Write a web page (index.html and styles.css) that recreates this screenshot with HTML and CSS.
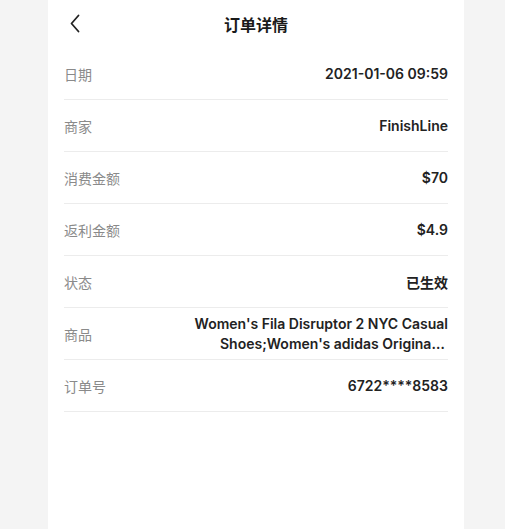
FILE: index.html
```html
<!DOCTYPE html>
<html lang="zh-CN">
<head>
    <meta charset="UTF-8">
    <title>订单详情</title>
    <link rel="stylesheet" href="styles.css">
</head>
<body>
    <div class="page">
        <div class="header">
            <a class="back" href="#">
                <svg width="24" height="24" viewBox="0 0 24 24"><path d="M14.5 3.5 L7.5 11.5 L14.5 19.5" fill="none" stroke="#222" stroke-width="1.8" stroke-linecap="round" stroke-linejoin="round"/></svg>
            </a>
            <h1>订单详情</h1>
            <span></span>
        </div>
        <div class="list">
            <div class="row">
                <span class="label">日期</span>
                <span class="value">2021-01-06 09:59</span>
            </div>
            <div class="row">
                <span class="label">商家</span>
                <span class="value">FinishLine</span>
            </div>
            <div class="row">
                <span class="label">消费金额</span>
                <span class="value">$70</span>
            </div>
            <div class="row">
                <span class="label">返利金额</span>
                <span class="value">$4.9</span>
            </div>
            <div class="row">
                <span class="label">状态</span>
                <span class="value">已生效</span>
            </div>
            <div class="row">
                <span class="label">商品</span>
                <div class="value goods">
                    <span class="line">Women's Fila Disruptor 2 NYC Casual</span>
                    <span class="line cut">Shoes;Women's adidas Originals NMD R1 Casual Shoes</span>
                </div>
            </div>
            <div class="row">
                <span class="label">订单号</span>
                <span class="value">6722****8583</span>
            </div>
        </div>
    </div>
</body>
</html>
```

FILE: styles.css
```css
html, body {
    height: 100%;
}
body {
    margin: 0;
    background: #f4f4f4;
    font-family: Inter, "Noto Sans CJK SC", sans-serif;
    color: #222;
}
.page {
    width: 416px;
    min-height: 100%;
    margin-left: 48px;
    background: #fff;
}
.header {
    height: 48px;
    padding: 0 16px;
    display: grid;
    grid-template-columns: 1fr auto 1fr;
    align-items: center;
}
.back {
    display: flex;
    align-items: center;
    width: 24px;
    height: 24px;
    margin-top: -1px;
}
h1 {
    margin: 0;
    font-size: 16px;
    font-weight: 700;
    font-family: "Noto Sans CJK SC", sans-serif;
    color: #1a1a1a;
}
.list {
    padding: 0 16px;
}
.row {
    display: flex;
    justify-content: space-between;
    align-items: center;
    min-height: 51px;
    border-bottom: 1px solid #ececec;
}
.label {
    font-size: 14px;
    color: #8a8a8a;
    font-family: "Noto Sans CJK SC", sans-serif;
    font-weight: 400;
}
.value {
    font-size: 14px;
    font-weight: 600;
    color: #222;
    text-align: right;
}
.goods {
    display: flex;
    flex-direction: column;
    align-items: flex-end;
    line-height: 20px;
}
.line {
    white-space: nowrap;
}
.cut {
    width: 228px;
    overflow: hidden;
    text-overflow: ellipsis;
}
```
